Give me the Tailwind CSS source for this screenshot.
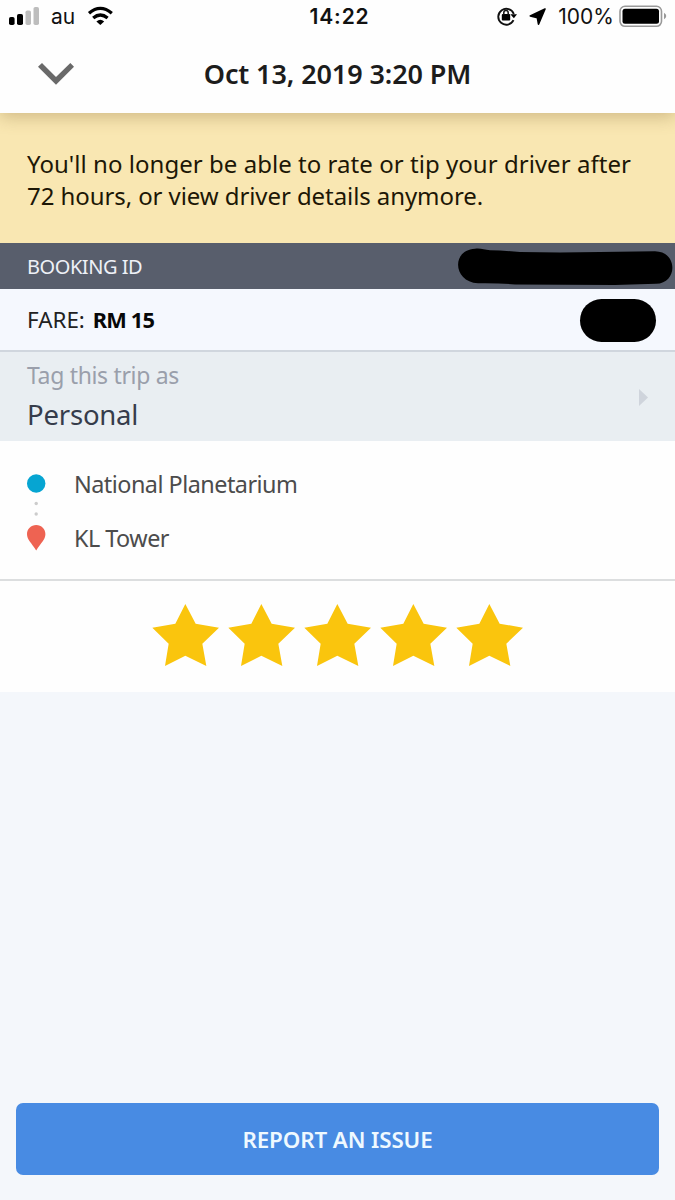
<!DOCTYPE html>
<html lang="en">
<head>
<meta charset="utf-8">
<title>Trip details</title>
<script src="https://cdn.jsdelivr.net/npm/@tailwindcss/browser@4"></script>
</head>
<body class="w-[675px] h-[1200px] overflow-hidden bg-[#f4f7fb] font-['Noto_Sans','Open_Sans',sans-serif] flex flex-col whitespace-nowrap">
<header class="relative z-10 h-[113px] shrink-0 bg-[#fefefe] shadow-[0_4px_16px_rgba(120,90,40,0.32)] flex flex-col">
  <div class="h-[34px] shrink-0 grid grid-cols-3 font-['Inter',sans-serif] text-[21px] leading-[33px] text-[#111]">
    <div class="flex pl-[9px]">
      <svg class="w-[31px] h-[34px] shrink-0" viewBox="0 0 31 34"><rect x="0" y="17" width="5.600" height="8" rx="1.800"/><rect x="8" y="14" width="6" height="11" rx="1.800"/><rect x="16.500" y="10.500" width="5.500" height="14.500" rx="1.800" fill="#bdbdbd"/><rect x="24.500" y="7" width="5.500" height="18" rx="1.800" fill="#bdbdbd"/></svg>
      <span class="ml-[11px]">au</span>
      <svg class="w-[26px] h-[34px] ml-[12px]" viewBox="87 0 26 34" fill="none" stroke="#000" stroke-width="3.300"><path d="M89 13.200Q100.300 3.600 111.800 13.200"/><path d="M93.200 18Q100.300 12 107.600 18"/><path d="M96.400 21.600Q100.300 18 104.200 21.600L100.300 25Z" fill="#000" stroke="none"/></svg>
    </div>
    <div class="text-center font-semibold tracking-[0.900px] pl-[4px]">14:22</div>
    <div class="flex justify-end pr-[8px]">
      <svg class="w-[50px] h-[34px] shrink-0" viewBox="496 0 50 34"><path d="M513.500 20.200A8 8 0 1 1 513.800 14" fill="none" stroke="#111" stroke-width="1.900"/><path d="M510.300 14.300H517L513.900 18.300Z"/><rect x="501.800" y="14" width="8.400" height="6.400" rx="1"/><path d="M503.800 15V12.800A2.200 2.200 0 0 1 508.200 12.800V15" fill="none" stroke="#111" stroke-width="1.500"/><path d="M545 9L530.300 16L537.300 17.600L538.500 24.200Z" stroke="#000" stroke-width="1.600" stroke-linejoin="round"/></svg>
      <span class="ml-[12px]">100%</span>
      <svg class="w-[48px] h-[34px] ml-[5px] shrink-0" viewBox="619 0 48 34"><rect x="620" y="6.300" width="41.500" height="20" rx="5" fill="none" stroke="#999" stroke-width="1.600"/><rect x="622.500" y="8.700" width="36.500" height="15" rx="2.500"/><path d="M664 12.800Q668.500 16 664 19.300Z" fill="#999"/></svg>
    </div>
  </div>
  <div class="h-[79px] grid grid-cols-[1fr_auto_1fr] items-center">
    <svg class="w-[36px] h-[22px] ml-[38px]" viewBox="114 188 108 66" fill="#696969"><path d="M126 188L168 230L211 188L222 199L168 253L114 199Z"/></svg>
    <h1 class="text-[27px] font-semibold tracking-[-0.1px] pt-[2px] text-[#1c1c1c]">Oct 13, 2019 3:20 PM</h1>
  </div>
</header>
<main class="grow flex flex-col">
  <p class="h-[130px] shrink-0 bg-[#f9e7b2] pl-[27px] pt-[35px] text-[24px] leading-[32px] text-[#1d1706]"><span class="tracking-[0.04px]">You'll no longer be able to rate or tip your driver after</span><br><span class="tracking-[-0.08px]">72 hours, or view driver details anymore.</span></p>
  <div class="h-[46px] shrink-0 bg-[#585e6c] pl-[27px] pr-[2px] flex items-center justify-between text-[20px] text-[#eef1f7]"><span class="tracking-[-0.45px] pt-px">BOOKING ID</span>
    <svg class="w-[216px] h-[38px] mt-[2px]" viewBox="457 248 216 38"><path d="M475 248.800C481 248 484 250 490 250.300Q505 250.500 520 252L560 252.500L600 252L655 251.200C678 251.500 678 283.500 656 283.800L615 285L515 284.500Q500 283 478 283.300C453 282 451 250 475 248.800Z"/></svg>
  </div>
  <div class="h-[61px] shrink-0 bg-[#f5f8fe] pl-[27px] pr-[19px] flex items-center justify-between text-[22.400px] text-[#222]">
    <div class="flex items-baseline gap-[8px]"><span>FARE:</span><b class="text-[21.800px] text-[#080808] tracking-[-0.850px]">RM 15</b></div>
    <div class="w-[76px] h-[43px] mt-[2px] rounded-full bg-black"></div>
  </div>
  <div class="h-[91px] shrink-0 bg-[#e9eef2] border-t-2 border-[#d0d6de] pl-[27px] pr-[26px] flex justify-between">
    <div class="pt-[8px]"><div class="text-[23px] leading-[30px] tracking-[-0.330px] text-[#9a9fab]">Tag this trip as</div><div class="text-[27.500px] leading-[49px] tracking-[-0.200px] text-[#363c4b]">Personal</div></div>
    <svg class="w-[11px] h-[17px] mt-[37px]" viewBox="0 0 11 17" fill="#cfd4dc"><path d="M1 0L10 8.500L1 17Z"/></svg>
  </div>
  <div class="h-[140px] shrink-0 bg-[#fefefe] border-b-2 border-[#dcdedf] pl-[27px] pt-[16px] flex text-[23.400px] leading-[54px] tracking-[-0.520px] text-[#4c4c4c]">
    <svg class="w-[19px] h-[78px] mt-[16px] mr-[28px]" viewBox="27 473 19 78"><circle cx="36.200" cy="483.500" r="9.200" fill="#06a5d2"/><circle cx="36.200" cy="503.500" r="1.700" fill="#ccc"/><circle cx="36.200" cy="514" r="1.700" fill="#ccc"/><path d="M36.200 525C41.500 525 45.400 529 45.400 534C45.400 540 41 542.500 36.200 550.500C31.400 542.500 27 540 27 534C27 529 31 525 36.200 525Z" fill="#ee6352"/></svg>
    <div><div>National Planetarium</div><div>KL Tower</div></div>
  </div>
  <div class="h-[111px] shrink-0 bg-[#fefefe] flex justify-center pt-[23px] gap-[9px]">
    <svg class="w-[67px] h-[62px]" viewBox="36 42 201 186" fill="#fac50d"><path id="star" d="M136 42L167 101L237 113L187 161L199 228L136 197L75 228L86 161L37 113L106 101Z"/></svg>
    <svg class="w-[67px] h-[62px]" viewBox="36 42 201 186" fill="#fac50d"><use href="#star"/></svg>
    <svg class="w-[67px] h-[62px]" viewBox="36 42 201 186" fill="#fac50d"><use href="#star"/></svg>
    <svg class="w-[67px] h-[62px]" viewBox="36 42 201 186" fill="#fac50d"><use href="#star"/></svg>
    <svg class="w-[67px] h-[62px]" viewBox="36 42 201 186" fill="#fac50d"><use href="#star"/></svg>
  </div>
  <button class="mt-auto mb-[25px] ml-[16px] w-[643px] h-[72px] shrink-0 rounded-[7px] bg-[#488be3] text-[22.400px] font-semibold tracking-[-0.120px] pt-[2px] text-[#eff9ff] text-center">REPORT AN ISSUE</button>
</main>
</body>
</html>
